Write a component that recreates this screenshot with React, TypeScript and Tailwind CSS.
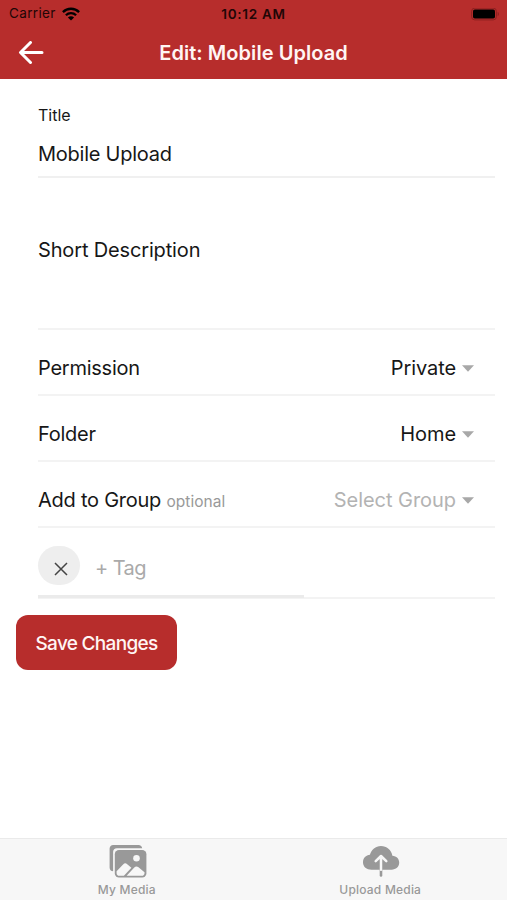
import { useState } from 'react'
import type { ReactNode } from 'react'

function StatusBar() {
  return (
    <div className="grid h-[26px] grid-cols-3 items-center pt-[2px] text-[13.5px] leading-none text-[#210606]">
      <div className="flex items-center gap-[6px] pl-[9px]">
        <span className="tracking-[0.35px]">Carrier</span>
        <svg width="18" height="14" viewBox="0 0 18 14" fill="none" stroke="black" strokeWidth="2.3">
          <path d="M0.9 5.1C5.4 0.6 12.6 0.6 17.1 5.1" />
          <path d="M3.9 8.2C6.7 5.4 11.3 5.4 14.1 8.2" />
          <path d="M9 13.6L5.9 10.5C7.6 8.9 10.4 8.9 12.1 10.5Z" fill="black" stroke="none" />
        </svg>
      </div>
      <span className="pt-px text-center font-semibold tracking-[0.7px]">10:12 AM</span>
      <div className="flex justify-end pr-[7px]">
        <svg width="29" height="13" viewBox="0 0 29 13">
          <rect x="0.6" y="0.1" width="24.8" height="11.8" rx="3.2" fill="none" stroke="#8d2020" />
          <rect x="2" y="1.5" width="22" height="9" rx="1.8" fill="black" />
          <path d="M26.7 3.8C28.4 4.5 28.4 7.5 26.7 8.2Z" fill="#8d2020" />
        </svg>
      </div>
    </div>
  )
}

function MediaIcon() {
  return (
    <svg width="40" height="36" viewBox="0 0 40 36" fill="#999">
      <path d="M5.2 1H30.5C32.6 1 34 2.4 34.2 4.3H8.9C6.6 4.3 5.1 5.8 5.1 8.1V27.3C3 27 1.6 25.5 1.6 23.4V4.6C1.6 2.5 3.1 1 5.2 1Z" />
      <rect x="6.8" y="6" width="31.6" height="27.6" rx="4.2" />
      <path
        d="M8.6 27.2L15.1 20.4C16.4 19.1 17.9 19 19.2 20.2L23.4 23.8L15.9 31.8H11.2C9.7 31.8 8.6 30.7 8.6 29.2Z"
        fill="#f7f7f7"
      />
      <path
        d="M18.6 31.8L26.3 23.5C27.6 22.1 29.1 22.1 30.5 23.3L36.5 28.2V29.2C36.5 30.7 35.4 31.8 33.9 31.8Z"
        fill="#f7f7f7"
      />
      <circle cx="28.5" cy="14.2" r="3.3" fill="#f7f7f7" />
    </svg>
  )
}

function UploadIcon() {
  return (
    <svg width="38" height="34" viewBox="0 0 38 34" fill="none">
      <path
        d="M9.5 25.7C4.6 25.7 1 22.8 1 18.2C1 13.9 4 11.5 7.9 10.8C9.4 5.7 13.6 2 18.9 2C24.7 2 29.3 5.9 30.4 11.7C34.4 12 37.2 14.7 37.2 18.6C37.2 23 33.9 25.7 29.6 25.7Z"
        fill="#999"
      />
      <path d="M19 25.5V31.5" stroke="#999" strokeWidth="2.6" strokeLinecap="round" />
      <path d="M19 25.7V13M13.7 17.2L19 12L24.3 17.2" stroke="#f7f7f7" strokeWidth="2.5" strokeLinecap="round" strokeLinejoin="round" />
    </svg>
  )
}

function SelectRow({ label, value, muted = false }: { label: ReactNode; value: string; muted?: boolean }) {
  return (
    <div className="flex h-[66px] items-center justify-between border-b-2 border-[#f3f3f3] pr-[21px] pt-[12px]">
      <div>{label}</div>
      <button className="flex items-center gap-[6px]">
        <span className={muted ? 'tracking-[-0.05px] text-[#b3b3b3]' : 'tracking-[-0.1px]'}>{value}</span>
        <svg width="12" height="7" viewBox="0 0 12 7" fill="#a8a8a8">
          <path d="M0 0.3H12L6 6.7Z" />
        </svg>
      </button>
    </div>
  )
}

export default function App() {
  const [title, setTitle] = useState('Mobile Upload')

  return (
    <div className="flex h-[900px] w-[507px] flex-col overflow-hidden bg-white font-['Inter','Liberation_Sans',sans-serif] text-[20px] tracking-[-0.25px] text-[#171717]">
      <header className="h-[79px] bg-[#b72d2c]">
        <StatusBar />
        <div className="grid h-[53px] grid-cols-[60px_1fr_60px] items-center">
          <button className="pl-[18px]" aria-label="Back">
            <svg width="26" height="24" viewBox="0 0 26 24" fill="none" stroke="white" strokeWidth="3" strokeLinecap="round" strokeLinejoin="round">
              <path d="M12.5 1.5L2.5 11.5L12.5 21.5M3 11.5H24" />
            </svg>
          </button>
          <h1 className="text-center font-semibold tracking-[0.05px] text-[#fff5f4]">Edit: Mobile Upload</h1>
        </div>
      </header>

      <main className="flex-1 pl-[38px] pr-[12px]">
        <div className="h-[99px] border-b-2 border-[#f0f0f0] pt-[24px]">
          <div className="text-[16px] leading-6 tracking-normal">Title</div>
          <input
            value={title}
            onChange={(e) => setTitle(e.target.value)}
            className="mt-[12px] block h-[30px] w-full outline-none"
          />
        </div>
        <div className="h-[152px] border-b-2 border-[#f3f3f3] pt-[57px] leading-[30px] tracking-[-0.15px]">Short Description</div>
        <SelectRow label="Permission" value="Private" />
        <SelectRow label="Folder" value="Home" />
        <SelectRow
          label={
            <>
              Add to Group <span className="text-[15.5px] tracking-[0.05px] text-[#999]">optional</span>
            </>
          }
          value="Select Group"
          muted
        />
        <div className="flex h-[71px] border-b-2 border-[#f3f3f3]">
          <div className="-mb-[1px] flex w-[266px] items-start border-b-[3px] border-[#ebebeb] pt-[18px]">
            <button className="flex h-[39px] w-[42px] items-center justify-center rounded-full bg-[#eee] pl-[4px] pt-[6px]" aria-label="Remove tag">
              <svg width="14" height="14" viewBox="0 0 14 14" stroke="#444" strokeWidth="1.5">
                <path d="M1 1L13 13M13 1L1 13" />
              </svg>
            </button>
            <span className="ml-[15px] mt-[7px] leading-[30px] tracking-[-0.6px] text-[#aaa]">+ Tag</span>
          </div>
        </div>
        <button className="-ml-[22px] mt-[16px] h-[55px] w-[161px] rounded-[12px] bg-[#b72d2c] pt-[3px] text-[19px] font-medium tracking-[-0.7px] text-[#fff5f4]">
          Save Changes
        </button>
      </main>

      <nav className="grid h-[62px] grid-cols-2 border-t border-[#eaeaea] bg-[#f7f7f7] text-[12px] font-medium leading-4 tracking-[0.2px] text-[#999]">
        <button className="flex flex-col items-center justify-start pt-[5px]">
          <span className="flex h-[38px] items-start pl-[2px]">
            <MediaIcon />
          </span>
          <span>My Media</span>
        </button>
        <button className="flex flex-col items-center justify-start pt-[5px]">
          <span className="flex h-[38px] items-start pl-[1px]">
            <UploadIcon />
          </span>
          <span>Upload Media</span>
        </button>
      </nav>
    </div>
  )
}
